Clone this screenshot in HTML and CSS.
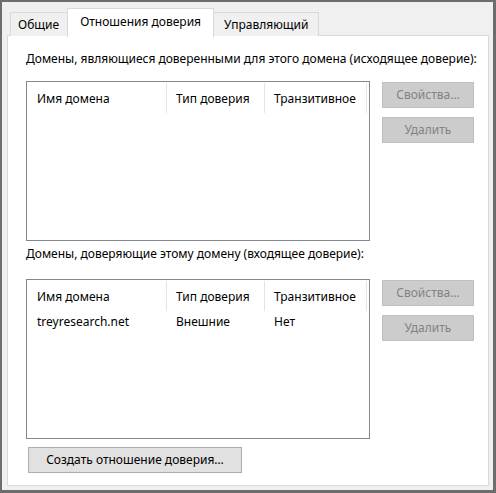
FILE: index.html
```html
<!DOCTYPE html>
<html lang="ru">
<head>
<meta charset="utf-8">
<link rel="stylesheet" href="styles.css">
</head>
<body>
<div class="window">
  <div class="tabs">
    <div class="tab first">Общие</div>
    <div class="tab active">Отношения доверия</div>
    <div class="tab last">Управляющий</div>
  </div>
  <div class="panel">
    <div class="label">Домены, являющиеся доверенными для этого домена (исходящее доверие):</div>
    <div class="group">
      <div class="list">
        <div class="row head">
          <div class="c1">Имя домена</div>
          <div class="c2">Тип доверия</div>
          <div class="c3">Транзитивное</div>
        </div>
      </div>
      <div class="btns">
        <div class="btn disabled">Свойства…</div>
        <div class="btn disabled">Удалить</div>
      </div>
    </div>
    <div class="label second">Домены, доверяющие этому домену (входящее доверие):</div>
    <div class="group g2">
      <div class="list">
        <div class="row head">
          <div class="c1">Имя домена</div>
          <div class="c2">Тип доверия</div>
          <div class="c3">Транзитивное</div>
        </div>
        <div class="row">
          <div class="c1">treyresearch.net</div>
          <div class="c2">Внешние</div>
          <div class="c3">Нет</div>
        </div>
      </div>
      <div class="btns">
        <div class="btn disabled">Свойства…</div>
        <div class="btn disabled">Удалить</div>
      </div>
    </div>
    <div class="btn create">Создать отношение доверия…</div>
  </div>
</div>
</body>
</html>
```
FILE: styles.css
```css
* { box-sizing: border-box; }
html, body { margin: 0; padding: 0; }
body {
  width: 496px;
  height: 493px;
  font-family: "Noto Sans", "Open Sans", sans-serif;
  font-size: 12px;
  color: #000;
  background: #6d6d6d;
}
.window {
  width: 496px;
  height: 493px;
  border-top: 2px solid #6d6d6d;
  border-left: 2px solid #6d6d6d;
  border-right: 3px solid #6d6d6d;
  border-bottom: 3px solid #6d6d6d;
  background: #f0f0f0;
  padding: 6px 4px 4px 5px;
  display: flex;
  flex-direction: column;
}
.tabs {
  display: flex;
  padding-left: 3px;
  height: 27px;
  align-items: flex-end;
  position: relative;
  z-index: 1;
}
.tab {
  height: 24px;
  line-height: 24px;
  border: 1px solid #d9d9d9;
  border-bottom: none;
  background: #f0f0f0;
  margin-bottom: -1px;
}
.tab.first { padding: 0 8px 0 7px; margin-right: -1px; }
.tab.last { padding: 0 9px 0 10px; margin-left: -1px; }
.tab.active {
  height: 29px;
  background: #fff;
  padding: 0 12px 0 12px;
  line-height: 25px;
  margin-bottom: -2px;
  position: relative;
}
.panel {
  flex: 1;
  background: #fff;
  border: 1px solid #d9d9d9;
  padding: 15px 0 0 18px;
  display: flex;
  flex-direction: column;
}
.label { height: 16px; line-height: 16px; }
.label.second { margin-top: 5px; }
.group {
  display: flex;
  gap: 12px;
  margin-top: 14px;
}
.group.g2 { margin-top: 17px; }
.list {
  width: 344px;
  height: 160px;
  border: 1px solid #828790;
}
.row {
  display: flex;
  height: 24px;
  line-height: 22px;
}
.row > div { padding-left: 9px; }
.row > .c1 { padding-left: 10px; }
.c1 { width: 140px; }
.c2 { width: 98px; }
.c3 { width: 102px; }
.row.head { height: 31px; padding-top: 1px; }
.row.head > div {
  border-right: 1px solid #e5e5e5;
  height: 30px;
  line-height: 31px;
}
.btns {
  display: flex;
  flex-direction: column;
  gap: 9px;
  padding-top: 1px;
}
.btn {
  width: 92px;
  height: 26px;
  line-height: 24px;
  text-align: center;
  border: 1px solid #adadad;
  background: #e1e1e1;
}
.btn.disabled {
  background: #cccccc;
  border-color: #bfbfbf;
  color: #838383;
}
.btn.create {
  width: 214px;
  margin-top: 8px;
  margin-left: 2px;
}
```
